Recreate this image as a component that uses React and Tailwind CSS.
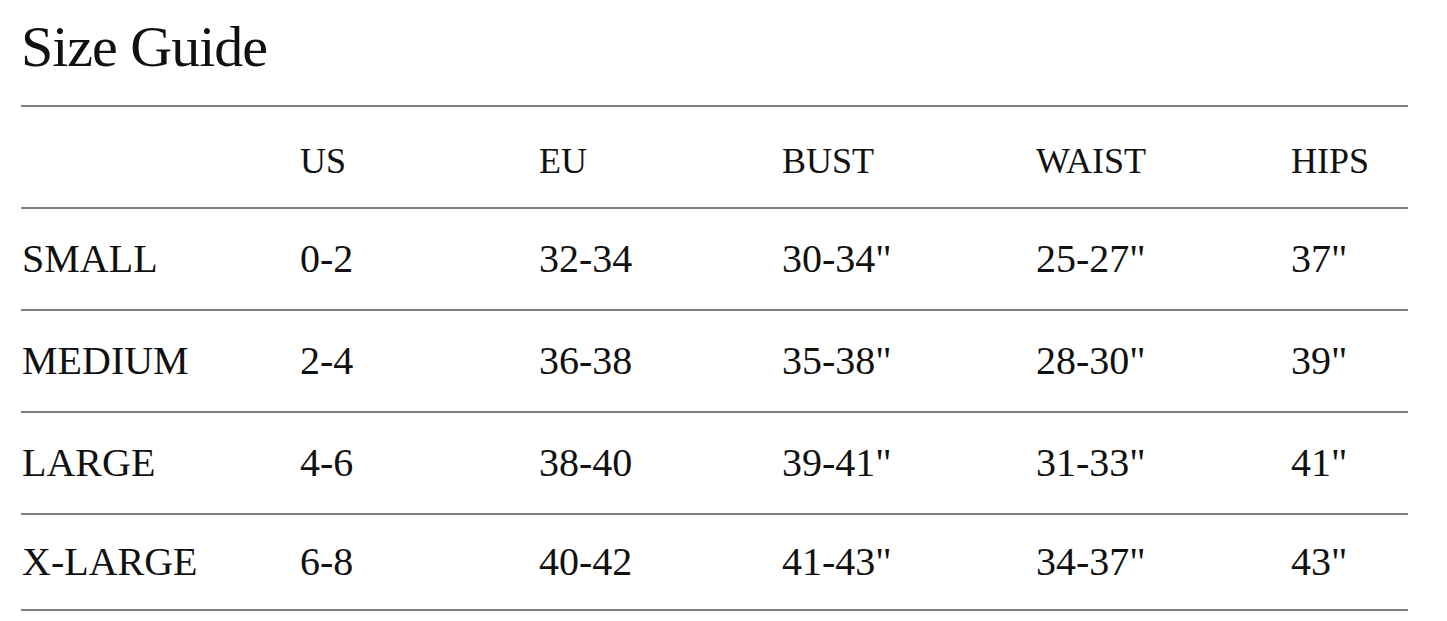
export default function App() {
  const headers = ["US", "EU", "BUST", "WAIST", "HIPS"];
  const rows = [
    { label: "SMALL", vals: ["0-2", "32-34", "30-34\"", "25-27\"", "37\""], h: "h-[102px]" },
    { label: "MEDIUM", vals: ["2-4", "36-38", "35-38\"", "28-30\"", "39\""], h: "h-[102px]" },
    { label: "LARGE", vals: ["4-6", "38-40", "39-41\"", "31-33\"", "41\""], h: "h-[102px]" },
    { label: "X-LARGE", vals: ["6-8", "40-42", "41-43\"", "34-37\"", "43\""], h: "h-[98px]" },
  ];
  const cols = "grid grid-cols-[279px_239px_243px_254px_255px_1fr] items-center";
  return (
    <div className="bg-white min-h-[621px] text-[#111] font-['Liberation_Serif','Times_New_Roman',serif]">
      <div className="ml-[21px] w-[1387px]">
        <h1 className="pt-[18px] mb-[29px] text-[58px] leading-none tracking-[-1px] font-normal">
          Size Guide
        </h1>
        <div className={`${cols} h-[102px] border-t-2 border-[#7f7f7f] pt-[8px] text-[36px] leading-none`}>
          <div></div>
          {headers.map((h) => (
            <div key={h}>{h}</div>
          ))}
        </div>
        {rows.map((r, i) => (
          <div
            key={r.label}
            className={`${cols} ${r.h} border-t-2 border-[#7f7f7f] text-[40px] leading-none ${i === rows.length - 1 ? "border-b-2" : ""}`}
          >
            <div className="pl-[1px]">{r.label}</div>
            {r.vals.map((v, j) => (
              <div key={j}>{v}</div>
            ))}
          </div>
        ))}
      </div>
    </div>
  );
}
